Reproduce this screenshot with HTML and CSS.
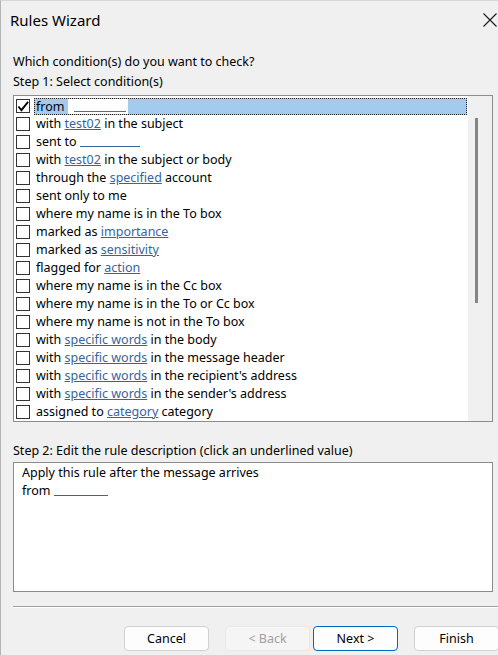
FILE: index.html
```html
<!DOCTYPE html>
<html>
<head>
<meta charset="utf-8">
<link rel="stylesheet" href="styles.css">
</head>
<body>
<div class="window">
  <div class="titlebar">
    <span class="title">Rules Wizard</span>
    <svg class="close" width="14" height="14" viewBox="0 0 14 14"><path d="M0.5 0.5 L13.5 13.5 M13.5 0.5 L0.5 13.5" stroke="#1a1a1a" stroke-width="1.1" fill="none"/></svg>
  </div>
  <div class="content">
    <div class="question">Which condition(s) do you want to check?</div>
    <div class="label step1">Step 1: Select condition(s)</div>
    <div class="listbox">
      <div class="rows">
        <div class="row"><span class="cb checked"><svg width="13" height="13" viewBox="0 0 13 13"><path d="M1.5 6.5 L4.8 10.5 L12 1.5" stroke="#000" stroke-width="2" fill="none"/></svg></span><span class="lbl selected">from <span class="redact"><span class="ul"></span></span></span></div>
        <div class="row"><span class="cb"></span><span class="lbl">with <a>test02</a> in the subject</span></div>
        <div class="row"><span class="cb"></span><span class="lbl">sent to <span class="blank"></span></span></div>
        <div class="row"><span class="cb"></span><span class="lbl">with <a>test02</a> in the subject or body</span></div>
        <div class="row"><span class="cb"></span><span class="lbl">through the <a>specified</a> account</span></div>
        <div class="row"><span class="cb"></span><span class="lbl">sent only to me</span></div>
        <div class="row"><span class="cb"></span><span class="lbl">where my name is in the To box</span></div>
        <div class="row"><span class="cb"></span><span class="lbl">marked as <a>importance</a></span></div>
        <div class="row"><span class="cb"></span><span class="lbl">marked as <a>sensitivity</a></span></div>
        <div class="row"><span class="cb"></span><span class="lbl">flagged for <a>action</a></span></div>
        <div class="row"><span class="cb"></span><span class="lbl">where my name is in the Cc box</span></div>
        <div class="row"><span class="cb"></span><span class="lbl">where my name is in the To or Cc box</span></div>
        <div class="row"><span class="cb"></span><span class="lbl">where my name is not in the To box</span></div>
        <div class="row"><span class="cb"></span><span class="lbl">with <a>specific words</a> in the body</span></div>
        <div class="row"><span class="cb"></span><span class="lbl">with <a>specific words</a> in the message header</span></div>
        <div class="row"><span class="cb"></span><span class="lbl">with <a>specific words</a> in the recipient's address</span></div>
        <div class="row"><span class="cb"></span><span class="lbl">with <a>specific words</a> in the sender's address</span></div>
        <div class="row"><span class="cb"></span><span class="lbl">assigned to <a>category</a> category</span></div>
      </div>
      <div class="scrollbar"><div class="thumb"></div></div>
    </div>
    <div class="label step2">Step 2: Edit the rule description (click an underlined value)</div>
    <div class="desc">
      <div>Apply this rule after the message arrives</div>
      <div>from <span class="blank2"></span></div>
    </div>
  </div>
  <div class="separator"></div>
  <div class="buttons">
    <button class="btn">Cancel</button>
    <button class="btn disabled">&lt; Back</button>
    <button class="btn default">Next &gt;</button>
    <button class="btn finish">Finish</button>
  </div>
</div>
</body>
</html>
```
FILE: styles.css
```css
html, body {
  margin: 0;
  padding: 0;
  background: #f0f0f0;
}
body {
  font-family: "Noto Sans", "Open Sans", sans-serif;
  font-size: 12.5px;
  color: #000;
}
.window {
  width: 497px;
  height: 654px;
  border-left: 1px solid #b4b4b4;
  border-top: 1px solid #d6d6d6;
  background: #f0f0f0;
  overflow: hidden;
}
.titlebar {
  height: 39px;
  display: flex;
  align-items: center;
  justify-content: space-between;
  padding-left: 9px;
  padding-right: 1px;
}
.title {
  font-size: 15px;
  margin-top: -2px;
}
.close {
  margin-top: -2px;
}
.content {
  padding-left: 12px;
  padding-right: 5px;
}
.question {
  height: 20px;
  line-height: 20px;
  margin-top: 12px;
}
.label {
  height: 16px;
  line-height: 16px;
}
.step1 {
  margin-top: 2px;
}
.listbox {
  margin-top: 5px;
  height: 325px;
  border: 1px solid #8c8c8c;
  background: #fff;
  display: flex;
}
.rows {
  flex: 1;
  padding-top: 1px;
  padding-left: 2px;
}
.row {
  height: 18px;
  display: flex;
  align-items: center;
}
.cb {
  width: 12px;
  height: 12px;
  border: 1px solid #333;
  background: #fff;
  flex: none;
  display: flex;
}
.lbl {
  margin-left: 4px;
  padding-left: 2px;
  height: 18px;
  line-height: 18px;
  white-space: nowrap;
  flex: 1;
}
.lbl.selected {
  background: #a3cbf0;
  outline: 1px dotted #222;
  outline-offset: -1px;
  height: 17px;
  line-height: 17px;
}
a {
  color: #3565a0;
  text-decoration: underline;
}
.redact {
  display: inline-block;
  width: 60px;
  height: 15px;
  background: #fff;
  vertical-align: -3px;
  position: relative;
}
.redact .ul {
  position: absolute;
  left: 6px;
  right: 2px;
  bottom: 2px;
  border-bottom: 1px solid #4a6fa0;
}
.blank {
  display: inline-block;
  width: 60px;
  border-bottom: 1px solid #3565a0;
  vertical-align: -1px;
}
.blank2 {
  display: inline-block;
  width: 54px;
  border-bottom: 1px solid #3565a0;
  vertical-align: -1px;
}
.scrollbar {
  width: 24px;
  background: #f0f0f0;
  margin-left: 1px;
  position: relative;
}
.thumb {
  position: absolute;
  left: 7px;
  top: 22px;
  width: 3px;
  height: 185px;
  background: #858585;
}
.step2 {
  margin-top: 21px;
}
.desc {
  margin-top: 3px;
  height: 126px;
  border: 1px solid #8c8c8c;
  background: #fff;
  padding: 1px 8px;
  line-height: 18px;
}
.separator {
  margin-top: 14px;
  margin-left: 12px;
  border-top: 1px solid #a0a0a0;
  border-bottom: 1px solid #fff;
}
.buttons {
  margin-top: 18px;
  display: flex;
  justify-content: flex-end;
  gap: 16px;
  padding-right: 0;
}
.btn {
  font-family: inherit;
  font-size: 12.5px;
  width: 85px;
  height: 25px;
  border: 1px solid #d0d0d0;
  border-radius: 4px;
  background: #fdfdfd;
  color: #000;
  padding: 0;
}
.btn.disabled {
  background: #f5f5f5;
  border-color: #e8e8e8;
  color: #a0a0a0;
}
.btn.default {
  border-color: #0067c0;
  margin-left: -13px;
}
.btn.finish {
  margin-right: -1px;
}
```
